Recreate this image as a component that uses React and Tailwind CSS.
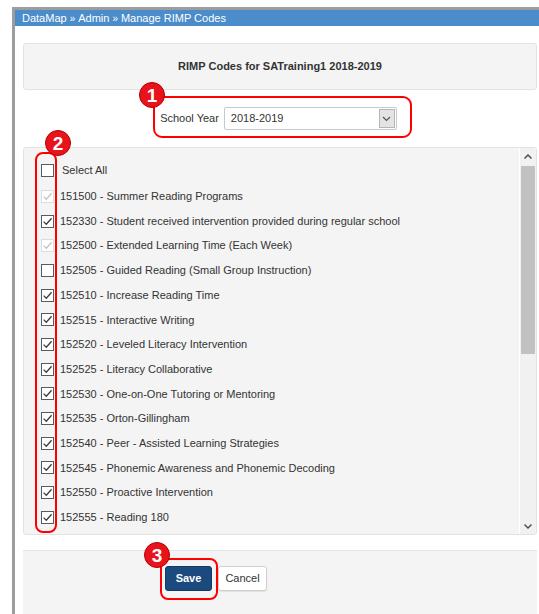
import React from "react";

const codes = [
  { label: "151500 - Summer Reading Programs", state: "locked" },
  { label: "152330 - Student received intervention provided during regular school", state: "on" },
  { label: "152500 - Extended Learning Time (Each Week)", state: "locked" },
  { label: "152505 - Guided Reading (Small Group Instruction)", state: "off" },
  { label: "152510 - Increase Reading Time", state: "on" },
  { label: "152515 - Interactive Writing", state: "on" },
  { label: "152520 - Leveled Literacy Intervention", state: "on" },
  { label: "152525 - Literacy Collaborative", state: "on" },
  { label: "152530 - One-on-One Tutoring or Mentoring", state: "on" },
  { label: "152535 - Orton-Gillingham", state: "on" },
  { label: "152540 - Peer - Assisted Learning Strategies", state: "on" },
  { label: "152545 - Phonemic Awareness and Phonemic Decoding", state: "on" },
  { label: "152550 - Proactive Intervention", state: "on" },
  { label: "152555 - Reading 180", state: "on" },
];

function Check({ state }) {
  const locked = state === "locked";
  return (
    <span
      className={`flex h-[13px] w-[13px] shrink-0 items-center justify-center border bg-white ${
        locked ? "border-[#dcdcdc]" : "border-[#5a5a5a]"
      }`}
    >
      {state !== "off" && (
        <svg width="11" height="11" viewBox="0 0 11 11">
          <path
            d="M1.6 5.6 L4.3 8.2 L9.6 2.2"
            fill="none"
            stroke={locked ? "#c4c4c4" : "#3c3c3c"}
            strokeWidth="1.3"
          />
        </svg>
      )}
    </span>
  );
}

function Badge({ n, className }) {
  return (
    <div
      className={`absolute flex h-[26px] w-[26px] items-center justify-center rounded-full border border-[#b00000] bg-[#e8131b] text-[19px] font-bold leading-none text-white ${className}`}
    >
      {n}
    </div>
  );
}

export default function App() {
  return (
    <div
      className="relative h-[614px] w-[539px] overflow-hidden bg-white text-[11px] text-[#333]"
      style={{ fontFamily: '"Liberation Sans", Arial, sans-serif' }}
    >
      <div className="ml-[12px] mt-[7px] flex h-[607px] flex-col border-l-[3px] border-t-[3px] border-[#9d9d9d]">
        {/* breadcrumb bar */}
        <div className="flex h-[16px] items-center bg-[#4b8cca] pl-[7px] text-[11px] text-white">
          DataMap <span className="mx-[3px] text-[10px]">»</span> Admin{" "}
          <span className="mx-[3px] text-[10px]">»</span> Manage RIMP Codes
        </div>

        <div className="flex flex-1 flex-col pl-[8px] pr-[2px]">
          {/* title panel */}
          <div className="mt-[17px] flex h-[47px] items-center justify-center rounded-[3px] border border-[#e2e2e2] bg-[#f4f4f4] font-bold text-[#333]">
            RIMP Codes for SATraining1 2018-2019
          </div>

          {/* school year selector */}
          <div className="mt-[17px] flex h-[23px] items-center justify-center pr-[3px]">
            <span className="mr-[5px]">School Year</span>
            <div className="flex h-[23px] w-[173px] items-stretch rounded-[2px] border border-[#c8c8c8] bg-white">
              <span className="flex flex-1 items-center pl-[6px]">2018-2019</span>
              <span className="m-[1px] flex w-[16px] items-center justify-center border border-[#b5b5b5] bg-[#e4e4e4]">
                <svg width="9" height="6" viewBox="0 0 9 6">
                  <path d="M1 1 L4.5 4.5 L8 1" fill="none" stroke="#555" strokeWidth="1.2" />
                </svg>
              </span>
            </div>
          </div>

          {/* code list */}
          <div className="mt-[17px] flex h-[388px] rounded-[3px] border border-[#e2e2e2] bg-[#f4f4f4]">
            <div className="flex-1 pl-[17px] pt-[10px]">
              <div className="mb-[1px] flex h-[25px] items-center gap-[8px]">
                <Check state="off" />
                <span>Select All</span>
              </div>
              {codes.map((c) => (
                <div key={c.label} className="flex h-[24.7px] items-center gap-[6px]">
                  <Check state={c.state} />
                  <span className="whitespace-nowrap">{c.label}</span>
                </div>
              ))}
            </div>
            <div className="flex w-[17px] flex-col border-l border-white bg-[#f1f1f1]">
              <div className="flex h-[16px] items-center justify-center">
                <svg width="8" height="5" viewBox="0 0 8 5">
                  <path d="M0.5 4.5 L4 1 L7.5 4.5" fill="none" stroke="#505050" strokeWidth="1.5" />
                </svg>
              </div>
              <div className="mx-[1px] mt-[2px] h-[188px] bg-[#c1c1c1]" />
              <div className="flex-1" />
              <div className="flex h-[16px] items-center justify-center">
                <svg width="8" height="5" viewBox="0 0 8 5">
                  <path d="M0.5 0.5 L4 4 L7.5 0.5" fill="none" stroke="#505050" strokeWidth="1.5" />
                </svg>
              </div>
            </div>
          </div>

          {/* footer */}
          <div className="mt-[15px] flex flex-1 gap-[6px] border-t border-[#e4e4e4] bg-[#f4f4f4] pl-[142px] pt-[15px]">
            <button className="h-[25px] w-[47px] rounded-[3px] border border-[#123a66] bg-[#1a4a7e] text-[11px] font-bold text-white">
              Save
            </button>
            <button className="h-[25px] w-[49px] rounded-[3px] border border-[#cfcfcf] bg-white text-[11px] text-[#333] shadow-[0_1px_1px_rgba(0,0,0,0.08)]">
              Cancel
            </button>
          </div>
        </div>
      </div>

      {/* annotation callouts */}
      <div className="absolute left-[153px] top-[96px] h-[42px] w-[259px] rounded-[9px] border-[2.5px] border-[#f00]" />
      <Badge n="1" className="left-[139px] top-[82px]" />

      <div className="absolute left-[35px] top-[152px] h-[381px] w-[22px] rounded-[8px] border-[2.5px] border-[#f00]" />
      <Badge n="2" className="left-[45px] top-[130px]" />

      <div className="absolute left-[160px] top-[558px] h-[42px] w-[58px] rounded-[8px] border-[2.5px] border-[#f00]" />
      <Badge n="3" className="left-[144px] top-[542px]" />
    </div>
  );
}
